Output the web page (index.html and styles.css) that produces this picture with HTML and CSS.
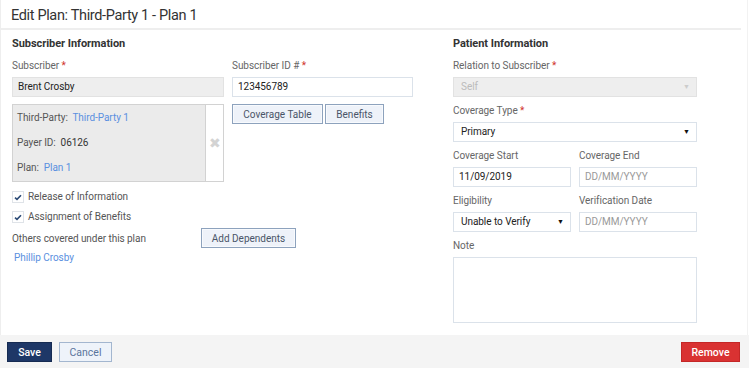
FILE: index.html
```html
<!DOCTYPE html>
<html>
<head>
<meta charset="utf-8">
<link rel="stylesheet" href="styles.css">
</head>
<body>
<div class="page">
  <main class="main">
    <header class="header"><h1 class="title">Edit Plan: Third-Party 1 - Plan 1</h1></header>
    <div class="columns">
      <section class="col-left">
        <h2 class="section-title">Subscriber Information</h2>
        <div class="row">
          <div class="field w212">
            <label class="label">Subscriber <span class="req">*</span></label>
            <input class="input disabled" value="Brent Crosby" readonly>
          </div>
          <div class="field w181">
            <label class="label">Subscriber ID # <span class="req">*</span></label>
            <input class="input" value="123456789">
          </div>
        </div>
        <div class="row row-plan">
          <div class="plan-box">
            <div class="plan-info">
              <div class="plan-line">Third-Party:&nbsp; <a class="link">Third-Party 1</a></div>
              <div class="plan-line">Payer ID:&nbsp; <span class="val">06126</span></div>
              <div class="plan-line">Plan:&nbsp; <a class="link">Plan 1</a></div>
            </div>
            <div class="plan-remove">&#x2716;</div>
          </div>
          <div class="btn-group">
            <button class="btn btn-cov">Coverage Table</button>
            <button class="btn btn-ben">Benefits</button>
          </div>
        </div>
        <div class="check-row">
          <span class="checkbox"><svg width="8" height="7" viewBox="0 0 8 7"><path d="M1 3.6 L3 5.4 L7 1.2" fill="none" stroke="#2b4a76" stroke-width="1.6"/></svg></span>
          <span>Release of Information</span>
        </div>
        <div class="check-row second">
          <span class="checkbox"><svg width="8" height="7" viewBox="0 0 8 7"><path d="M1 3.6 L3 5.4 L7 1.2" fill="none" stroke="#2b4a76" stroke-width="1.6"/></svg></span>
          <span>Assignment of Benefits</span>
        </div>
        <div class="others-row">
          <span class="others-text">Others covered under this plan</span>
          <button class="btn btn-dep">Add Dependents</button>
        </div>
        <a class="link dependent">Phillip Crosby</a>
      </section>
      <section class="col-right">
        <h2 class="section-title">Patient Information</h2>
        <div class="field">
          <label class="label">Relation to Subscriber <span class="req">*</span></label>
          <div class="select disabled"><span class="select-text muted">Self</span><span class="arrow muted-arrow">&#x25BC;</span></div>
        </div>
        <div class="field gap">
          <label class="label">Coverage Type <span class="req">*</span></label>
          <div class="select"><span class="select-text">Primary</span><span class="arrow">&#x25BC;</span></div>
        </div>
        <div class="row gap">
          <div class="field half">
            <label class="label">Coverage Start</label>
            <input class="input" value="11/09/2019">
          </div>
          <div class="field half">
            <label class="label">Coverage End</label>
            <input class="input" placeholder="DD/MM/YYYY">
          </div>
        </div>
        <div class="row gap">
          <div class="field half">
            <label class="label">Eligibility</label>
            <div class="select"><span class="select-text">Unable to Verify</span><span class="arrow">&#x25BC;</span></div>
          </div>
          <div class="field half">
            <label class="label">Verification Date</label>
            <input class="input" placeholder="DD/MM/YYYY">
          </div>
        </div>
        <div class="field gap">
          <label class="label">Note</label>
          <textarea class="textarea"></textarea>
        </div>
      </section>
    </div>
  </main>
  <footer class="footer">
    <div class="footer-left">
      <button class="btn-save">Save</button>
      <button class="btn-cancel">Cancel</button>
    </div>
    <button class="btn-remove">Remove</button>
  </footer>
</div>
</body>
</html>
```
FILE: styles.css
```css
* { box-sizing: border-box; }
html, body { margin: 0; padding: 0; }
body {
  width: 749px;
  height: 368px;
  font-family: Roboto, "Liberation Sans", Arial, sans-serif;
  font-size: 10px;
  letter-spacing: -0.05px;
  color: #333;
  background: #fff;
  overflow: hidden;
}
.page {
  display: flex;
  flex-direction: column;
  height: 368px;
}
.main {
  height: 335px;
  border-left: 1px solid #eee;
  width: 748px;
  border-right: 1px solid #f2f2f2;
}
.header {
  width: 740px;
  height: 30px;
  border-bottom: 2px solid #eeeeee;
  padding-left: 10px;
}
.title {
  margin: 0;
  font-size: 14.5px;
  letter-spacing: -0.35px;
  font-weight: 400;
  line-height: 31px;
  color: #333;
}
.columns {
  display: flex;
  gap: 40px;
  padding-left: 11px;
}
.col-left { width: 401px; }
.col-right { width: 244px; }
.section-title {
  margin: 6px 0 7px;
  font-size: 11px;
  font-weight: 700;
  line-height: 16px;
  color: #333;
}
.row { display: flex; gap: 8px; }
.field { display: flex; flex-direction: column; }
.w212 { width: 212px; }
.w181 { width: 181px; }
.half { width: 118px; }
.gap { margin-top: 7px; }
.label {
  line-height: 14px;
  color: #666;
  margin-bottom: 4px;
}
.req { color: #d0342c; }
.input, .select, .textarea {
  height: 20px;
  border: 1px solid #dbe2ea;
  background: #fff;
  font-family: inherit;
  font-size: 10px;
  letter-spacing: -0.05px;
  color: #222;
  padding: 0 5px 1px;
  outline: none;
  width: 100%;
}
.input::placeholder { color: #999; }
.input.disabled, .select.disabled {
  background: #eeeeee;
  border-color: #e2e2e2;
}
.select {
  display: flex;
  align-items: center;
  justify-content: space-between;
  padding: 0 6px 1px 7px;
}
.select-text { color: #222; }
.muted { color: #bbb; }
.arrow { font-size: 7px; color: #111; }
.muted-arrow { color: #ccc; }
.textarea {
  height: 66px;
  resize: none;
}
.row-plan { margin-top: 7px; align-items: flex-start; }
.plan-box {
  width: 212px;
  height: 78px;
  display: flex;
  border: 1px solid #d2d2d2;
}
.plan-info {
  width: 193px;
  background: #ebebeb;
  border-right: 1px solid #d2d2d2;
  padding: 0 0 0 4px;
}
.plan-line {
  line-height: 25px;
  color: #555;
}
.val { color: #333; }
.plan-remove {
  flex: 1;
  display: flex;
  align-items: center;
  justify-content: center;
  color: #d3d3d3;
  font-size: 14px;
}
.link { color: #5a8fe0; text-decoration: none; }
.btn-group { display: flex; gap: 2px; }
.btn {
  height: 20px;
  padding: 0;
  border: 1px solid #8da2bd;
  background: #eef2f9;
  color: #4a5568;
  font-family: inherit;
  font-size: 10px;
  white-space: nowrap;
  box-shadow: inset 0 0 0 1px #f8fafd;
}
.btn-cov { width: 91px; }
.btn-ben { width: 59px; }
.check-row {
  display: flex;
  align-items: center;
  gap: 4px;
  margin-top: 8px;
  line-height: 14px;
  color: #555;
}
.check-row.second { margin-top: 6px; }
.checkbox {
  width: 12px;
  height: 12px;
  border: 1px solid #dfe3e8;
  background: #fff;
  display: flex;
  align-items: center;
  justify-content: center;
}
.others-row {
  display: flex;
  align-items: center;
  margin-top: 4px;
}
.others-text {
  width: 189px;
  color: #555;
  line-height: 14px;
  padding-top: 2px;
}
.btn-dep { width: 95px; }
.dependent {
  display: block;
  margin: 3px 0 0 2px;
  line-height: 14px;
}
.footer {
  height: 33px;
  background: #f4f4f4;
  display: flex;
  justify-content: space-between;
  align-items: flex-start;
  padding: 7px 9px 0 7px;
}
.footer-left { display: flex; gap: 7px; }
.btn-save, .btn-cancel, .btn-remove {
  height: 20px;
  font-family: inherit;
  font-size: 10.5px;
  padding: 0;
}
.btn-save {
  width: 45px;
  background: #1e3767;
  border: 1px solid #162b52;
  color: #fff;
  font-weight: 500;
}
.btn-cancel {
  width: 53px;
  background: #eef3fa;
  border: 1px solid #a3b6cf;
  color: #5a759c;
}
.btn-remove {
  width: 59px;
  background: #d93232;
  border: 1px solid #c42727;
  color: #fff;
  font-weight: 500;
}
```
